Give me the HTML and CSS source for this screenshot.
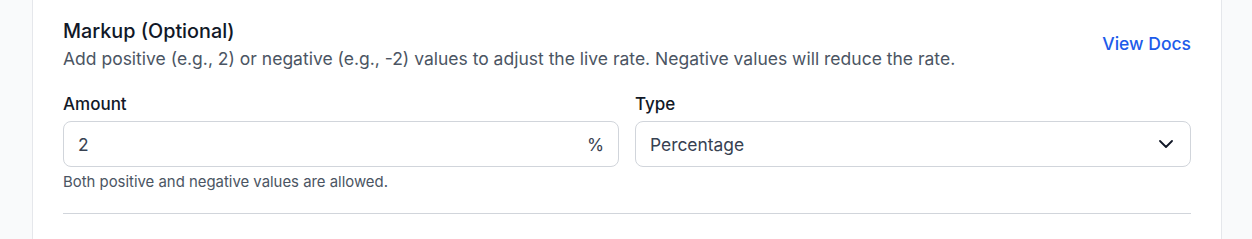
FILE: index.html
```html
<!DOCTYPE html>
<html>
<head>
<meta charset="utf-8">
<link rel="stylesheet" href="styles.css">
</head>
<body>
<div class="page">
  <section class="card">
    <div class="header">
      <div class="header-text">
        <h2 class="title">Markup (Optional)</h2>
        <p class="desc">Add positive (e.g., 2) or negative (e.g., -2) values to adjust the live rate. Negative values will reduce the rate.</p>
      </div>
      <a class="docs" href="#">View Docs</a>
    </div>
    <div class="fields">
      <div class="field">
        <label class="label">Amount</label>
        <div class="control">
          <span class="value">2</span>
          <span class="suffix">%</span>
        </div>
        <p class="help">Both positive and negative values are allowed.</p>
      </div>
      <div class="field">
        <label class="label">Type</label>
        <div class="control">
          <span class="value">Percentage</span>
          <svg class="chev" width="14" height="8" viewBox="0 0 14 8"><path d="M1 1l6 6 6-6" fill="none" stroke="#111827" stroke-width="1.8" stroke-linecap="round" stroke-linejoin="round"/></svg>
        </div>
      </div>
    </div>
    <hr class="divider">
  </section>
</div>
</body>
</html>
```
FILE: styles.css
```css
html, body {
  margin: 0;
  padding: 0;
  background: #f9fafb;
  font-family: Inter, "Noto Sans", sans-serif;
}
.page {
  padding-left: 32px;
  width: 1190px;
  height: 239px;
}
.card {
  background: #fff;
  border-left: 1px solid #e5e7eb;
  border-right: 1px solid #e5e7eb;
  height: 239px;
  box-sizing: border-box;
  padding: 18px 30px 0 30px;
}
.header {
  display: flex;
  align-items: center;
  justify-content: space-between;
}
.title {
  margin: 0;
  font-size: 19.8px;
  font-weight: 500;
  color: #111827;
  line-height: 26px;
}
.desc {
  margin: 2px 0 0;
  font-size: 17.5px;
  color: #4b5563;
  line-height: 26px;
}
.docs {
  color: #1d5bea;
  font-weight: 500;
  font-size: 17.5px;
  text-decoration: none;
  margin-top: -4px;
}
.fields {
  display: grid;
  grid-template-columns: 1fr 1fr;
  gap: 16px;
  margin-top: 21px;
}
.label {
  display: block;
  font-size: 17px;
  font-weight: 500;
  color: #111827;
  line-height: 22px;
  margin-bottom: 6px;
}
.control {
  height: 46px;
  box-sizing: border-box;
  border: 1px solid #d1d5db;
  border-radius: 8px;
  display: flex;
  align-items: center;
  justify-content: space-between;
  padding: 0 14px 0 14px;
  font-size: 17.4px;
  color: #374151;
}
.suffix {
  color: #374151;
}
.chev {
  margin-right: 3px;
}
.help {
  margin: 6px 0 0;
  font-size: 14.9px;
  color: #4b5563;
  line-height: 18px;
}
.divider {
  border: 0;
  border-top: 1px solid #d1d5db;
  margin: 22px 0 0;
}
```
